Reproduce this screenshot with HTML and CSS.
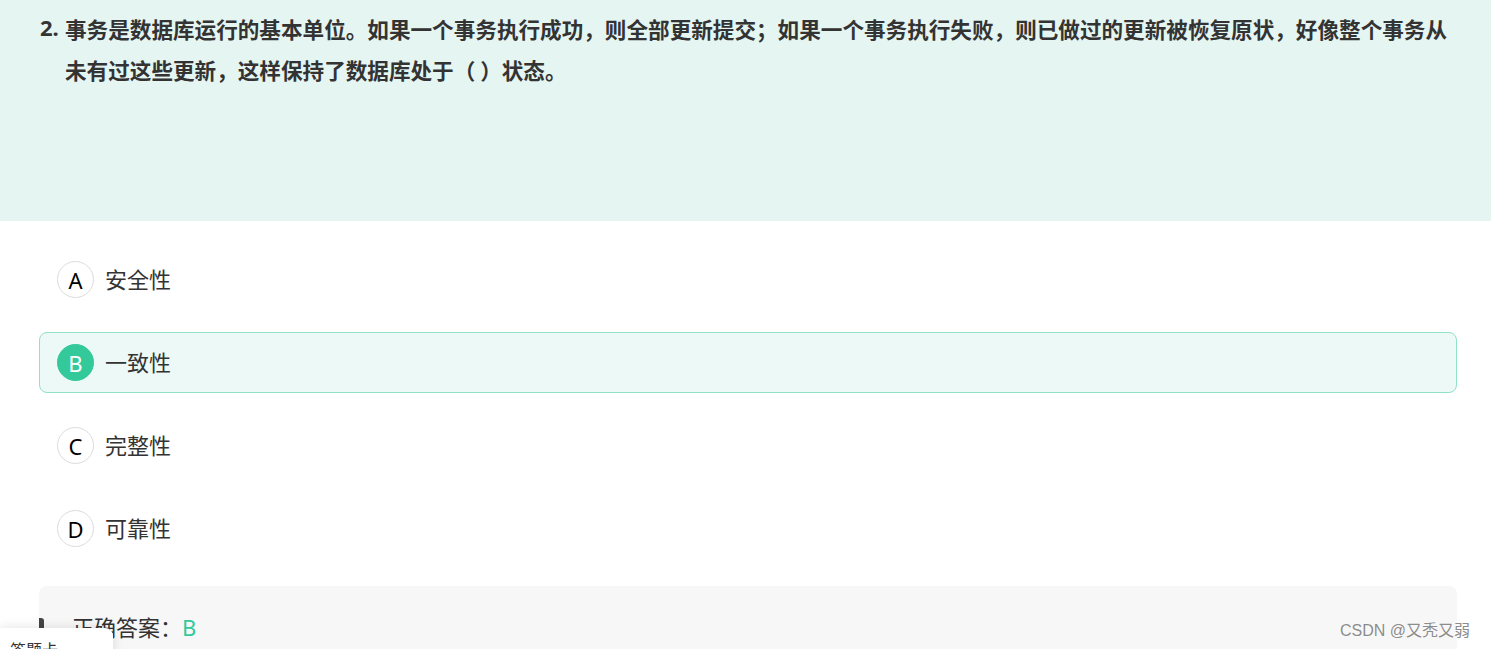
FILE: index.html
```html
<!DOCTYPE html>
<html lang="zh">
<head>
<meta charset="utf-8">
<link rel="stylesheet" href="styles.css">
</head>
<body>
<div class="page">
  <section class="question">
    <div class="q-row">
      <span class="q-num">2.</span>
      <p class="q-text">事务是数据库运行的基本单位。如果一个事务执行成功，则全部更新提交；如果一个事务执行失败，则已做过的更新被恢复原状，好像整个事务从未有过这些更新，这样保持了数据库处于（ ）状态。</p>
    </div>
  </section>
  <section class="options">
    <div class="option"><span class="letter">A</span><span class="opt-text">安全性</span></div>
    <div class="option selected"><span class="letter">B</span><span class="opt-text">一致性</span></div>
    <div class="option"><span class="letter">C</span><span class="opt-text">完整性</span></div>
    <div class="option"><span class="letter">D</span><span class="opt-text">可靠性</span></div>
    <div class="answer">
      <span class="mark"></span>
      <span class="answer-label">正确答案：</span><span class="answer-val">B</span>
    </div>
  </section>
  <div class="card-tab">答题卡</div>
  <div class="watermark">CSDN @又秃又弱</div>
</div>
</body>
</html>
```

FILE: styles.css
```css
html, body {
  margin: 0;
  padding: 0;
  background: #fff;
  overflow: hidden;
}
.page {
  position: relative;
  width: 1491px;
  height: 649px;
  overflow: hidden;
  font-family: "Noto Sans CJK SC", "Noto Sans", sans-serif;
  color: #333;
}
.question {
  background: #e5f5f2;
  height: 221px;
  box-sizing: border-box;
  padding: 8px 40px 0 40px;
}
.q-row {
  display: flex;
  align-items: flex-start;
}
.q-num {
  font-family: "Noto Sans", sans-serif;
  font-weight: 700;
  font-size: 22px;
  line-height: 38px;
  width: 25px;
  flex: none;
  color: #333;
}
.q-text {
  margin: 0;
  font-weight: 700;
  font-size: 21.6px;
  line-height: 41px;
  color: #333;
}
.options {
  padding: 28px 34px 0 39px;
  display: flex;
  flex-direction: column;
  gap: 22px;
}
.option {
  display: flex;
  align-items: center;
  height: 61px;
  box-sizing: border-box;
  padding-left: 17px;
  border: 1px solid transparent;
  border-radius: 8px;
}
.option.selected {
  background: #edf9f6;
  border-color: #8fe2c4;
}
.letter {
  width: 37px;
  height: 37px;
  box-sizing: border-box;
  border: 1px solid #dcdcdc;
  border-radius: 50%;
  display: flex;
  align-items: center;
  justify-content: center;
  font-family: "Noto Sans", sans-serif;
  font-size: 22px;
  color: #000;
  background: #fff;
  flex: none;
}
.selected .letter {
  background: #33c99a;
  border-color: #33c99a;
  color: #fff;
}
.opt-text {
  margin-left: 11px;
  font-size: 22px;
  line-height: 28px;
  padding-bottom: 3px;
  color: #333;
}
.answer {
  position: relative;
  margin-top: 5px;
  background: #f7f7f7;
  border-radius: 8px;
  height: 90px;
  padding: 25px 0 0 33px;
  box-sizing: border-box;
  font-size: 22px;
  line-height: 30px;
}
.mark {
  position: absolute;
  left: 0;
  top: 32px;
  width: 5px;
  height: 14px;
  background: #444;
  border-radius: 0 3px 3px 0;
}
.answer-label {
  color: #333;
}
.answer-val {
  font-family: "Noto Sans", sans-serif;
  color: #33c99a;
}
.card-tab {
  position: absolute;
  left: 0;
  top: 628px;
  width: 113px;
  height: 60px;
  background: #fff;
  border-radius: 0 8px 0 0;
  box-shadow: 0 0 12px rgba(0, 0, 0, 0.12);
  box-sizing: border-box;
  padding: 10px 0 0 10px;
  font-size: 16px;
  line-height: 22px;
  color: #333;
}
.watermark {
  position: absolute;
  left: 1340px;
  top: 620px;
  font-family: "Liberation Sans", "Noto Sans CJK SC", sans-serif;
  font-size: 16px;
  line-height: 22px;
  color: #8c8c8c;
  text-shadow: 0 0 2px #fff;
}
```
